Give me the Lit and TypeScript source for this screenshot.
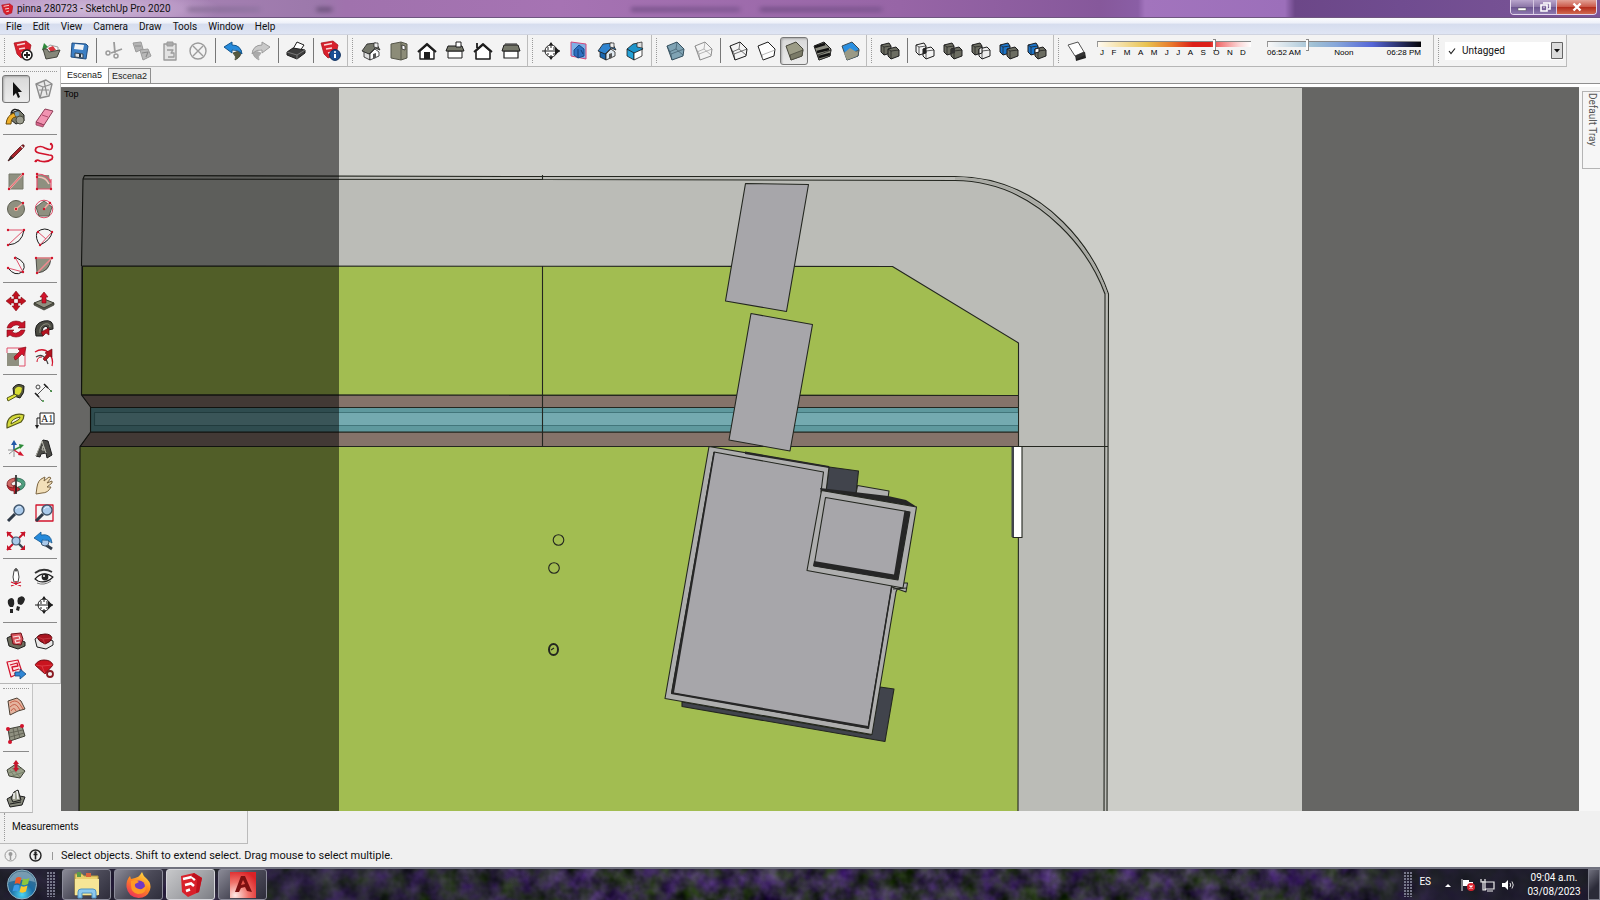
import { LitElement, html, svg, css, SVGTemplateResult } from "lit";
import { customElement, property, state } from "lit/decorators.js";
import { classMap } from "lit/directives/class-map.js";

const p = (d: string, fill = "none", stroke = "none", w = 1) =>
  svg`<path d=${d} fill=${fill} stroke=${stroke} stroke-width=${w} stroke-linejoin="round"/>`;
const c = (x: number, y: number, r: number, fill = "none", stroke = "none", w = 1) =>
  svg`<circle cx=${x} cy=${y} r=${r} fill=${fill} stroke=${stroke} stroke-width=${w}/>`;

const K = "#1d1d1d";
const R = "#d2142c";
const PINK = "#e0506a";
const STONE = "#8f9080";
const DIM = "#9b9b9b";

const dots = (...pts: [number, number][]) => pts.map(([x, y]) => c(x, y, 1.2, R));

const box = (top: string, side: string, line = K, wire = false) => svg`
  ${p("M2 5L12 1L19 8L18 15L7 19Z", top, line)}
  ${wire ? p("M2 5L6 13L19 8M6 13L7 19M12 1L11 8L4 11M11 8L18 14", "none", line, 0.6) : p("M6 14L19 9L18 15L7 19Z", side, line, 0.7)}`;

const solids = (a: string, b: string, wa = K, wb = K) => svg`
  ${p("M1 4L9 2L11 5V12L4 14L1 11Z", a, wa)}
  ${p("M1 4L4 6L11 5M4 6V14", "none", wa, 0.7)}
  ${p("M8 8L16 6L19 9V15L11 18L8 15Z", b, wb)}
  ${p("M8 8L11 10L19 9M11 10V18", "none", wb, 0.7)}`;

const house3d = (roof: string, wall: string, side: string) => svg`
  ${p("M3 10L9 13V19L3 16Z", side, K, 0.8)}
  ${p("M9 13L14 8L18 11V15L9 19Z", wall, K, 0.8)}
  ${p("M1 10L6 3L15 2L19 9L14 7L8 13Z", roof, K, 0.8)}
  ${p("M13 2V6L17 7V2Z", "#eee", K, 0.7)}
  ${p("M12 13L15 12V17L12 18Z", "#555")}`;

const sLogo = (x = 0, y = 0, s = 1) => svg`<g transform="translate(${x} ${y}) scale(${s})">
  ${p("M1 3L13 1L18 5L16 15L8 18L4 14Z", "#d8202c", "#a30f1a", 0.7)}
  ${p("M4 5L12 3.500M6 9L12 8M8 13L12 12", "none", "#f7dada", 1.4)}</g>`;

const pale = svg`${p("M1 3L12 1L16 13L5 18Z", "#fde3e3", R, 1.2)}${p("M4 6L11 4L12 7L6 8L7 12L13 10M8 15L14 13", "none", R, 1.3)}`;

const compass = svg`${c(10, 10, 6, "#fff", K)}${p("M1 10H19M10 2V7M10 14V18M7 6V9M13 6V9M7 12V14M13 12V14", "none", K)}${p("M14 6L19 10L14 14ZM10 1L8 4H12ZM10 19L8 16H12Z", K)}`;
const lens = svg`${p("M2 18L9 11", "none", "#2f3a48", 3)}${c(13, 7, 5, "#a9c9ea", "#42566c", 1.4)}${p("M10 6Q12 3 15 4", "none", "#e8f3fc", 1)}`;

const icons: Record<string, SVGTemplateResult> = {
  new: svg`${sLogo(0, -1, 1)}${c(14, 14, 5, "#fff", K, 1.6)}${p("M14 11V17M11 14H17", "none", K, 1.8)}`,
  open: svg`${p("M4 8L9 4L17 6V14L5 16Z", "#f6f6f6", "#888", 0.8)}${p("M7 7L12 5L15 9L10 11Z", "#d8343c")}${p("M1 9L3 2L7 6L5 7L4 10Z", "#2f8a3c")}${p("M2 8L5 18L16 16L19 9L8 11L6 8Z", "#85877a", "#44453d")}`,
  save: svg`${p("M3 2L17 3L19 5L17 18L2 16Z", "#3c7fc4", "#1f4c80")}${p("M6 3L15 4L14 9L5 8Z", "#f2f4f6")}${p("M6 12L14 13V17L6 16Z", "#dfe4ea", "#345")}${p("M11 13V16", "none", "#234", 2)}`,
  cut: svg`${p("M10 1L11 12M18 8L7 12", "none", DIM, 1.8)}${c(12, 15, 2, "none", DIM, 1.5)}${c(4, 12, 2, "none", DIM, 1.5)}`,
  copy: svg`${p("M1 2L9 1L11 8L4 11Z", "#b4b4b4", DIM)}${p("M8 9L16 8L19 15L11 19Z", "#b9b9b9", DIM)}${p("M3 5H9M10 12L16 11L14 16", "none", "#8a8a8a", 1.2)}`,
  paste: svg`${p("M4 3H16V19H4Z", "#e2e2e2", DIM, 1.4)}${p("M7 1H13V5H7Z", "#aaa", DIM)}${p("M7 9H13L11 12H14V16H8", "none", DIM, 1.3)}`,
  erase: svg`${c(10, 10, 8, "none", DIM, 1.4)}${p("M5 5L15 15M15 5L5 15", "none", DIM, 1.4)}`,
  undo: svg`${p("M10 12Q14 16 12 19Q19 16 18 9Z", "#55583f", "#33351f", 0.7)}${p("M1 6L9 1V4Q18 4 19 13Q15 8 9 9V12Z", "#258adb", "#13568f")}`,
  redo: svg`${p("M10 12Q6 16 8 19Q1 16 2 9Z", "#aaa", DIM, 0.7)}${p("M19 6L11 1V4Q2 4 1 13Q5 8 11 9V12Z", "#c9c9c9", DIM)}`,
  print: svg`${p("M7 8L11 1L18 4L14 10Z", "#fff", K)}${p("M1 11L7 7L19 9V12L11 18L1 14Z", "#3c3c3c", K)}${p("M1 11L11 14L19 9M11 14V18", "none", "#888", 0.8)}`,
  info: svg`${sLogo(-1, -1, 1)}${c(14, 14, 5.4, "#1b4f94", "#0b2c5a")}${p("M14 13V17", "none", "#fff", 2)}${c(14, 11, 1, "#fff")}`,
  iso: house3d("#74766a", "#fff", "#ddd"),
  topview: svg`${p("M2 3L12 1L18 3V17L12 19L2 17Z", "#8c8c78", "#55564a")}${p("M12 1V19", "none", "#55564a")}${p("M13 4L16 5V9L13 8Z", "#fff", K, 0.7)}`,
  front: svg`${p("M3 10L10 4L17 10V18H3Z", "#fff", K, 1.4)}${p("M1 11L10 3L19 11", "none", K, 2.2)}${p("M7 11H13V18H7Z", K)}`,
  right: svg`${p("M3 10H17V17H3Z", "#fff", K)}${p("M3 5H17L19 10H1Z", "#75776a", K)}${p("M11 1H16V6H11Z", "#fff", K)}`,
  back: svg`${p("M3 10L10 4L17 10V18H3Z", "#fff", K, 1.6)}${p("M1 11L10 3L19 11M4 7V2", "none", K, 1.8)}`,
  left: svg`${p("M3 10H17V17H3Z", "#fff", K, 1.2)}${p("M3 4H17L19 10H1Z", "#75776a", K)}${p("M4 3H16", "none", K)}`,
  section: compass,
  secplane: svg`${p("M2 1L17 3V18L2 15Z", "#7fb0e6", "#d3477a")}${p("M5 9L10 4L15 8V15L9 17L5 14Z", "#2d6fc0", "#1b4a88")}${p("M9 8V17M12 9L14 13", "none", "#173f77")}`,
  seccut: house3d("#2f83cf", "#dfe8ef", "#1b66ae"),
  secfill: svg`${p("M2 8L9 11V19L2 15Z", "#25a2d8", K, 0.8)}${p("M9 11L17 8V15L9 19Z", "#fff", K, 0.8)}${p("M2 8L8 3L13 2L18 8L9 12Z", "#1d93c9", K, 0.8)}${p("M12 2L17 1V7L12 6Z", "#ddd", K, 0.7)}`,
  xray: box("#7fa3b4", "#54788c", "#35505f", true),
  backedge: box("#f4f4f4", "#f4f4f4", "#8d8d8d", true),
  wire: box("none", "none", K, true),
  hidden: svg`${p("M2 5L12 1L19 8L18 15L7 19Z", "#fff", K)}${p("M6 14L19 9M6 14L7 19", "none", "#999", 0.7)}`,
  shaded: box("#9c9c86", "#7b7b68", "#45453a"),
  textured: svg`${box("#8b8c80", "#8b8c80")}${p("M3 6L13 3M5 11L17 8M7 16L18 13", "none", "#111", 2.4)}`,
  mono: svg`${box("#2a8fe0", "#8b8b79", "#3a4a55")}${p("M4 12L10 7L18 12L17 15L7 19Z", "#9a9a86")}`,
  outer: solids("#6c6d62", "#6c6d62"),
  intersect: svg`${solids("none", "none")}${p("M8 8L11 6V12L8 13Z", "#222")}`,
  union: svg`${solids("#6c6d62", "#6c6d62")}${p("M8 8L12 7V12L8 13Z", "#333")}`,
  subtract: svg`${solids("#6c6d62", "#eee")}${p("M8 8L11 6V12L8 13Z", "#eee", K)}`,
  trim: solids("#1c74c8", "#6c6d62"),
  split: svg`${solids("#1c74c8", "#6c6d62")}${p("M8 8L12 7V11L8 12Z", "#fff", K)}`,
  shadow: svg`${p("M8 13L18 11L19 17L9 20Z", "#222")}${p("M1 4L11 1L17 11L8 15Z", "#fff", "#555")}${p("M8 15L17 11L18 14L10 18Z", "#333")}`,

  select: svg`${p("M7 3V17L10 14L12 19L14 18L12 13H16Z", "#111")}`,
  component: svg`${p("M2 5L12 1L18 5L15 17L6 19Z", "#e9e9e9", "#8c8c8c", 1.4)}${p("M2 5L9 8L18 5M9 8L6 19M5 11L15 11M10 2L13 16", "none", "#8c8c8c", 1.2)}`,
  paint: svg`${p("M5 6L13 3L18 8V14L10 17L5 13Z", "#77796b", K)}${c(14, 13, 4, "#9d9e90", "#4a4b40")}${p("M5 6Q7 0 14 4", "none", K, 1.4)}${p("M0 17Q1 8 8 6L10 10Q5 10 5 17Z", "#efb02b", "#6b4a08")}${c(11, 7, 2.2, "#7aa0b8")}`,
  eraser: svg`${p("M2 15L11 2L19 4L10 18Z", "#f193b1", "#8d3b55")}${p("M2 15L10 18L9 20L2 18Z", "#d6638a", "#8d3b55", 0.7)}${p("M8 8L14 10", "none", "#b34d70")}`,
  line: svg`${p("M2 18L5 13L16 2Q19 1 18 4L7 15Z", "#a8232a", "#4d1013", 0.8)}${p("M2 18L5 13L7 15Z", "#2a2a2a")}${p("M15 3L17 5", "none", "#ddd", 1.4)}`,
  freehand: svg`${p("M1 19Q2 16 6 18Q13 20 18 16Q20 12 15 12L5 10Q0 9 2 5Q6 2 11 5Q17 8 18 5Q19 2 17 1", "none", R, 1.7)}${dots([2, 18], [17, 1])}`,
  rect: svg`${p("M3 3H17V18H3Z", STONE, "#77786a")}${p("M3 18L17 3", "none", "#f3b6b0", 2)}${p("M3 18L17 3", "none", R, 0.6)}${dots([3, 18], [17, 3])}`,
  rotrect: svg`${p("M3 4H15L17 18H3Z", STONE)}${p("M3 3V18H17V8M3 3Q14 3 17 12", "none", PINK, 1.2)}${p("M4 6Q12 6 15 13", "none", "#f3c0b8", 1.5)}${dots([3, 3], [3, 18], [17, 18], [3, 6])}`,
  circle: svg`${c(10, 10, 8.5, STONE, "#5e5f52")}${p("M10 10L17 4", "none", "#f3a8a0", 1.6)}${c(10, 10, 2, "#f0c0a0")}${dots([10, 10], [17, 4])}`,
  polygon: svg`${c(10, 10, 8.8, "none", PINK)}${p("M10 2L18 8L15 17H5L2 8Z", STONE, "#5e5f52")}${p("M10 10L16 3", "none", "#f3a8a0", 1.6)}${dots([10, 10], [16, 4])}`,
  arc: svg`${p("M2 18Q16 17 18 3", "none", K)}${p("M2 3H18L2 18", "none", PINK)}${dots([2, 3], [18, 3], [2, 18])}`,
  arc2: svg`${p("M3 5Q1 12 6 18Q17 13 18 5Q11 -1 3 5", "none", K)}${p("M6 18L18 5M4 5L12 12", "none", PINK)}${dots([6, 18], [18, 5], [4, 5])}`,
  arc3: svg`${p("M2 13Q9 22 16 17Q23 8 9 2", "none", K)}${p("M9 2L17 17L2 13", "none", PINK)}${dots([9, 3], [17, 17], [2, 13])}`,
  pie: svg`${p("M2 3H17Q16 17 3 18Z", STONE, K, 0.7)}${p("M2 3H18M3 18L18 3", "none", "#f08a90", 1.5)}${dots([2, 3], [18, 3], [3, 18])}`,
  move: svg`${p("M10 0L14 5H12V8H8V5H6ZM20 10L15 6V8H12V12H15V14ZM10 20L6 15H8V12H12V15H14ZM0 10L5 6V8H8V12H5V14Z", "#c0111f", "#7a0a12", 0.5)}${p("M8.500 8.500H11.500V11.500H8.500Z", "#f4f4f4")}`,
  push: svg`${p("M0 12L10 8L20 12L10 17Z", "#8f9080", "#3c3d33")}${p("M0 12V14L10 19L20 14V12L10 17Z", "#5b5c50", "#33342a", 0.7)}${p("M10 1L14 6H12V12H8V6H6Z", "#d2142c", "#7a0a12", 0.6)}`,
  rotate: svg`${p("M1 9Q3 2 10 2Q14 2 16 4L19 2V9H12L14 7Q9 4 5 9ZM19 11Q17 18 10 18Q6 18 4 16L1 18V11H8L6 13Q11 16 15 11Z", "#c8142a", "#7a0a12", 0.6)}`,
  follow: svg`${p("M2 17Q-1 4 10 2Q20 0 19 10L14 11Q14 6 10 8Q7 11 9 17Z", "#4a4a42", "#1b1b1b")}${p("M6 14Q5 7 11 5Q16 4 16 8", "none", "#8f9080", 1)}${p("M7 13L15 9V16L12 14L9 17Z", "#b5131f", "#5d0910", 0.6)}`,
  scale: svg`${p("M1 6H13V19H1Z", STONE)}${p("M1 1H19V19M1 1V6M13 19H19", "none", PINK)}${p("M9 13L8 10L14 4L12 2L20 0L18 9L16 7L11 12Z", "#d2142c", "#7a0a12", 0.6)}`,
  offset: svg`${p("M1 5Q9 0 15 6Q20 12 18 19", "none", R, 1.3)}${p("M3 15Q3 10 8 10", "none", R)}${p("M2 10Q10 5 14 17", "none", "#444", 1.3)}${p("M9 12L13 7L11 6L18 2L18 10L16 9L11 14Z", "#b5131f", "#5d0910", 0.6)}`,
  tape: svg`${p("M7 5Q11 -1 18 3Q19 10 14 15L8 13Z", "#55563a", K)}${p("M9 6Q12 2 16 5Q16 9 13 12L9 11Z", "#d9de35")}${p("M1 15L9 11L11 13L2 18Z", "#e1e63a", "#55571a")}`,
  dimension: svg`${p("M3 12L8 18M3 12L12 3M12 3L18 9", "none", "#555")}${p("M1 10L5 14M10 1L14 5", "none", K, 1.6)}${c(4, 4, 2, "none", "#444")}${c(17, 8, 1, "#3a8a3a")}${c(9, 18, 1, "#3a8a3a")}`,
  protractor: svg`${p("M1 17Q0 9 6 5Q12 2 18 4Q18 8 15 11Z", "#d4d93a", "#55571a", 1.2)}${p("M5 13Q5 8 14 6Q14 8 12 9Z", "#f5f5ee", "#55571a")}`,
  text: svg`${p("M6 2H20V13H6Z", "#fff", K)}<text x="7" y="11" font-family="Liberation Serif, serif" font-size="10" fill="#111">A1</text>${p("M3 7V16M3 7H6", "none", K)}${p("M1 14H5L3 18Z", K)}`,
  axes: svg`${p("M8 11V4", "none", "#2158a8", 1.6)}${p("M5 6L8 1L11 6Z", "#2158a8")}${p("M8 11L14 8", "none", "#2e8b3a", 1.4)}${p("M13 5L18 6L14 10Z", "#2e8b3a")}${p("M8 11L14 15", "none", R, 1.4)}${p("M14 12L18 17L12 16Z", R)}${p("M2 11H8M8 11V18M3 15L8 11", "none", "#777", 0.8)}`,
  text3d: svg`${p("M2 17L9 1L14 2L18 16L13 19L12 14L7 15L6 18Z", "#4b4b47", K)}${p("M2 17L8 2L12 14M9 7L8 11H11Z", "none", "#b6b6ac", 1)}`,
  orbit: svg`${p("M9 3Q1 4 1 9Q1 13 8 14V11Q5 10 5 9Q5 7 9 6Z", "#cf6a66", "#6f1219", 0.7)}${p("M11 3Q20 4 19 10Q18 14 12 16V12Q16 11 16 9Q15 7 11 6Z", "#51a080", "#1f5a43", 0.7)}${p("M1 10Q2 16 8 16V19L14 14L8 10V13Q3 13 1 10Z", "#c62a35", "#6f1219", 0.7)}${p("M10 0V19", "none", K, 1.6)}`,
  pan: svg`${p("M2 19L3 12Q4 5 9 3L11 2L10 6L15 2L17 3L13 8L18 6V8L13 12L17 12Q14 18 8 18Z", "#f2dfb9", "#7b6440")}`,
  zoom: lens,
  zoomwin: svg`${p("M2 2H19V18H2Z", "none", R, 1.3)}${lens}`,
  zoomext: svg`${p("M11 11L18 18", "none", "#38424e", 2.4)}${p("M1 1L7 7M19 1L13 7M1 19L7 13", "none", "#c8142a", 2)}${p("M1 1H6L1 6ZM19 1H14L19 6ZM1 19H6L1 14ZM19 19H14L19 14Z", "#c8142a")}${c(10, 10, 4, "#a9c9ea", "#42566c", 1.2)}`,
  prev: svg`${p("M9 12L18 18", "none", "#2f3a48", 3)}${c(11, 11, 4, "#a9c9ea", "#42566c", 1)}${p("M0 7L7 1V4Q17 2 18 12Q14 8 8 9V12Z", "#258adb", "#13568f", 0.8)}`,
  camera: svg`${p("M8 4Q10 -1 12 4L13 10L12 15H8L7 10Z", "#fff", "#444")}${c(10, 3, 1.6, "#555")}${p("M5 19L15 15M5 15L15 19M10 14V17", "none", R, 1.3)}`,
  look: svg`${p("M1 6Q9 0 18 5", "none", "#333", 1.8)}${p("M1 12Q9 3 19 10Q12 17 4 14Z", "#fff", K, 1.2)}${c(11, 10, 3.4, "#222")}${c(10, 9, 1, "#fff")}${p("M3 16Q10 19 17 14", "none", "#777", 1)}`,
  walk: svg`${p("M2 5Q6 1 8 5Q9 9 7 12H4Q1 9 2 5ZM4 14H7V18H4Z", "#252525")}${p("M12 3Q17 -1 19 4Q18 9 15 10L12 9Q11 5 12 3ZM11 11L14 12L13 16L10 15Z", "#252525")}`,
  secplane2: compass,
  warehouse: svg`${p("M1 7L5 5L19 11V15L12 18L3 15Z", "#6c6d5d", K)}${p("M5 3L15 2L17 8L15 14L7 13Z", "#d9555d", "#6f1219")}${p("M7 6L13 5L14 8L9 9L10 12L14 11", "none", "#fbe3e3", 1.1)}`,
  extwarehouse: svg`${p("M1 8L6 4L19 10V14L12 18L3 16Z", "#e8e8e8", K)}${p("M3 6Q5 3 11 3Q17 3 18 7Q17 11 11 13Q4 10 3 6Z", "#a91520", "#5a0a10")}${p("M3 6L9 8L18 7M9 8L11 13", "none", "#c73b45", 0.8)}`,
  layout: svg`${pale}${p("M9 13H14V10L20 15L14 20V17H9Z", "#2f86d4", "#134a80", 0.8)}`,
  extman: svg`${p("M1 6Q4 1 10 1Q17 1 19 6L11 15Z", "#c9141f", "#6f0a11")}${p("M1 6L8 7L19 6M8 7L11 15", "none", "#e0444d", 0.8)}${c(16, 15, 3, "#eee", "#8a1a22", 1.8)}`,
  contours: svg`${p("M2 5L11 2L15 5L19 13L12 15L4 19Z", "#e5b49f", "#4c4034")}${p("M4 7Q9 3 13 7L17 13M4 11Q9 6 12 11L14 14M5 15Q8 10 10 15", "none", "#c1553d", 0.9)}`,
  scratch: svg`${p("M2 5L16 2L19 12L4 17Z", STONE, "#3f4036")}${p("M7 4L9 16M11 3L14 14M3 9L17 6M4 13L18 9", "none", "#5a5b4e", 0.8)}${[c(2, 5, 2, R), c(16, 2, 2, R), c(4, 18, 2, R)]}`,
  smoove: svg`${p("M1 10L10 4L19 11L14 18L3 16Z", "#9aa08a", "#3f4036")}${p("M3 13L16 8M6 16L18 12M6 8L14 17M4 10L9 17", "none", "#6c775f", 0.7)}${p("M10 0L13 4H11.5V8H13L10 12L7 8H8.5V4H7Z", "#c8142a")}`,
  stamp: svg`${p("M1 11L8 7L19 9L16 17L4 19Z", "#85877a", K)}${p("M5 10L8 4L12 2L15 12L7 14Z", "#9b9d8e", K)}${p("M8 5V11M11 3L12 11", "none", "#f2f2f2", 1.6)}${p("M4 16L15 14", "none", K)}`,
};

@customElement("tool-icon")
class ToolIcon extends LitElement {
  @property() name = "";
  static styles = css`
    :host { display: block; width: 20px; height: 20px; }
    svg { display: block; width: 100%; height: 100%; overflow: visible; }
  `;
  render() {
    return html`<svg viewBox="0 0 20 20" aria-hidden="true">${icons[this.name]}</svg>`;
  }
}

@customElement("model-scene")
class ModelScene extends LitElement {
  static styles = css`
    :host { display: block; position: relative; overflow: hidden; background: #cccdc8; }
    svg { position: absolute; width: 100%; height: 100%; }
    .e { stroke: #23261f; stroke-width: 1.1; stroke-linejoin: round; }
    .n { fill: none; }
    .walk { fill: #bbbcb7; }
    .curb { fill: none; stroke: #a9aaa4; stroke-width: 2.5; }
    .grass { fill: #a2bd51; }
    .earth { fill: #85736a; }
    .bank { fill: #5f999e; }
    .water { fill: #74aab0; stroke: #42767b; }
    .slab { fill: #a7a6aa; }
    .rim { fill: #aeaeae; }
    .shade { fill: #41444c; }
    .deep { fill: #262626; }
    .label { position: absolute; left: 3px; top: 1px; font: 9px/10px "Liberation Sans", sans-serif; color: #000; }
  `;
  render() {
    return html`
      <svg viewBox="61 88 1518 723" preserveAspectRatio="xMinYMin slice" role="img" aria-label="Site plan, top view">
        <path class="e walk" d="M84.500 175.500L542 176.500H955Q1018 177 1063 222Q1095 254 1108.500 294L1107 820H79V300L81.500 266L83 179Z"/>
        <path class="curb" d="M955 178.500Q1016 179 1061.500 224Q1093 255 1106.500 294"/>
        <path class="e n" d="M83 179L542 179.500L955 180.500Q1014 181 1060 226Q1091 256 1105 294L1104 820M542.500 175V180M1018 446.500H1108"/>
        <path class="e grass" d="M82.500 266L892.500 266.500L1018.500 343V395.500L81.500 395Z"/>
        <path class="e earth" d="M81.500 395L1018.500 395.500V407.500H90.500Z"/>
        <path class="e earth" d="M90.500 432H1018.500V446.500H80Z"/>
        <path class="e bank" d="M90.500 407.500H1018.500V432H90.500Z"/>
        <path class="e water" d="M1018 412.500H94.500V425.500H1018"/>
        <path d="M61 266H82L81.500 395L90.500 407V432L80 446L79 812H61Z" fill="#cccdc8"/>
        <path class="e n" d="M82 266L81.500 395L90.500 407V432L80 446.500"/>
        <path class="e grass" d="M80 446.500H1018.500L1018 820H79Z"/>
        <path class="e n" d="M542.500 266V446"/>
        <path d="M61 88H339V811H61ZM1302 88H1579V811H1302Z" opacity=".5"/>
        <path class="e slab" d="M745.500 183.500L808.500 184.500L786.500 311.500L725.500 301Z"/>
        <path class="e slab" d="M751 313.500L812.500 324.500L790 451L729 440Z"/>
        <path class="e" fill="#fff" d="M1013 446.500H1022V537.500H1013Z"/>
        <path class="shade" d="M1011.500 447H1014V537H1011.500Z"/>
        <path class="e shade" d="M829 467L858.500 471L856 494L826 490Z"/>
        <path class="e rim" d="M857.500 485.500L889 491L888 498L856 494Z"/>
        <path class="e shade" d="M682 702L682 706.500L885 741.500L894 689L880 687L871 735Z"/>
        <path class="e rim" d="M709 446.500L829 467L826 492L899 585L896 592L872 734.500L665 698.500Z"/>
        <path class="deep" d="M745 451.500L829 466L829 468L745 454Z"/>
        <path class="e slab" d="M714 452L823.500 472L821 492L892 585L868 728L671.500 693Z"/>
        <path class="deep" d="M713.500 452L715 452L674 692.500L868 726L891 586H892.500L869 729L671 694Z"/>
        <path class="e rim" d="M892 587L893 583L907.500 583L906 592Z"/>
        <path class="e n" d="M893 589L907 588"/>
        <path class="deep" d="M820 488L888 496L906 500L917 507L821 491Z"/>
        <path class="e rim" d="M821.500 490.500L916.500 507L903 588L807 570.500Z"/>
        <path class="e slab" d="M825.500 497.500L910 512L898 580L814 566Z"/>
        <path class="deep" d="M904.500 510.500L910 512L898 580L813 566L814 561L894 574.500Z"/>
        <g class="e n">
          <circle cx="558.500" cy="540" r="5.300"/>
          <circle cx="554" cy="568" r="5.300"/>
          <ellipse cx="553.500" cy="649.500" rx="4.500" ry="5.500" stroke-width="2"/>
          <path d="M551 650L554 648"/>
        </g>
      </svg>
      <span class="label">Top</span>`;
  }
}

const MAIN: string[][] = [
  ["new", "open", "save", "|", "cut", "copy", "paste", "erase", "|", "undo", "redo", "|", "print", "|", "info"],
  ["iso", "topview", "front", "right", "back", "left"],
  ["section", "secplane", "seccut", "secfill"],
  ["xray", "backedge", "|", "wire", "hidden", "shaded", "textured", "mono"],
  ["outer", "|", "intersect", "union", "subtract", "trim", "split"],
];
const LARGE: string[][] = [
  ["select", "component", "paint", "eraser"],
  ["line", "freehand", "rect", "rotrect", "circle", "polygon", "arc", "arc2", "arc3", "pie"],
  ["move", "push", "rotate", "follow", "scale", "offset"],
  ["tape", "dimension", "protractor", "text", "axes", "text3d"],
  ["orbit", "pan", "zoom", "zoomwin", "zoomext", "prev"],
  ["camera", "look", "walk", "secplane2"],
  ["warehouse", "extwarehouse", "layout", "extman"],
];
const SANDBOX: string[][] = [["contours", "scratch"], ["smoove", "stamp"]];
const DISABLED = new Set(["cut", "copy", "paste", "erase", "redo"]);

@customElement("app-root")
class AppRoot extends LitElement {
  @state() private face = "shaded";
  @state() private tool = "select";
  @state() private scene = "Escena5";

  static styles = css`
    :host {
      display: flex; flex-direction: column; height: 100vh; overflow: hidden;
      font: 10px/14px Roboto, "Noto Sans", sans-serif; color: #111; background: #f0f0f0;
    }
    * { box-sizing: border-box; }
    button { font: inherit; color: inherit; background: none; border: 0; padding: 0; margin: 0; }

    .title {
      display: flex; align-items: center; height: 18px; flex: none; position: relative; overflow: hidden;
      border-bottom: 1px solid #6f5680;
      background:
        radial-gradient(ellipse 130px 22px at 90px 9px, #d3bfdce0, #c5a6d0a0 70%, transparent),
        linear-gradient(90deg, #b18cbc 0, #9c78ab 320px, #a072ad 345px, #a673b3 560px, #9765a6 900px, #86589b 1100px, #8a5ea5 1138px, #a274bd 1145px, #9c6fba 1285px, #6c4788 1295px, #704c90 1400px, #7b5597 100%);
    }
    .title h1 { margin: 0; font: inherit; color: #111; position: relative; }
    .title .logo { width: 12px; height: 12px; margin: 0 4px 0 1px; }
    .haze { position: absolute; inset: 0; filter: blur(2px); opacity: .55;
      background:
        linear-gradient(90deg, transparent 185px, #6f5b7e 190px, #86709a 258px, transparent 262px, transparent 315px, #4c3a5c 318px, #4c3a5c 330px, transparent 334px, transparent 630px, #5b3f70 632px, #6a4a80 738px, transparent 742px, transparent 758px, #5b3f70 762px, #6a4a80 880px, transparent 884px) 0 7px / 100% 5px no-repeat; }
    .winbtns { display: flex; margin-left: auto; align-self: flex-start; margin-right: 3px; position: relative; height: 15px; border: 1px solid #e3d6ec; border-top: 0; border-radius: 0 0 4px 4px; overflow: hidden; }
    .winbtns button { width: 23px; display: grid; place-items: center; background: linear-gradient(#b9a5cc, #8d77a8 48%, #6d5590 52%, #8d78ae); border-right: 1px solid #d6c8e2; }
    .winbtns .close { width: 39px; border: 0; background: linear-gradient(#e2a196, #cb5a4a 48%, #b32c1c 52%, #d06a50); }
    .winbtns svg { width: 12px; height: 10px; }

    .menu { display: flex; flex: none; height: 17px; gap: 11px; padding: 0 6px; align-items: flex-end; background: linear-gradient(#fbfcfe, #eef1f9 30%, #d6ddee 40%, #dfe5f4); border-bottom: 1px solid #d0d4e0; }
    .menu button { line-height: 15px; }

    .bar { display: flex; flex: none; height: 32px; }
    .group { display: flex; align-items: center; padding: 0 2px 0 9px; border-right: 1px solid #bcbcbc; border-bottom: 1px solid #b6b6b6; position: relative; background: #f3f3f3; }
    .group::before { content: ""; position: absolute; left: 4px; top: 3px; bottom: 3px; border-left: 1px dotted #9a9a9a; }
    .bar i { width: 7px; height: 25px; background: linear-gradient(#777, #777) 3px 0 / 1px 100% no-repeat; }
    .tool { width: 28px; height: 28px; display: grid; place-items: center; border: 1px solid transparent; border-radius: 3px; }
    .tool.on { border-color: #777; background: linear-gradient(#d8d8d8, #ececec); box-shadow: inset 1px 1px 2px #aaa; }

    .slide { display: flex; flex-direction: column; width: 154px; height: 27px; font: 8px/9px "Liberation Sans", sans-serif; color: #000; }
    .months { margin-left: 6px; }
    .hours { margin: 0 10px 0 16px; }
    .slide input { appearance: none; width: 100%; height: 13px; margin: 0; background: transparent; }
    .slide input::-webkit-slider-runnable-track { height: 6px; border-top: 1px solid #888; border-left: 1px solid #999; }
    .months input::-webkit-slider-runnable-track { background: linear-gradient(90deg, #fffaf0, #e9c250 32%, #e8782c 48%, #dc1f18 62%, #dc1f18 73%, #f06a6a 78%, #fbd5d5 92%, #fff); }
    .hours input::-webkit-slider-runnable-track { background: linear-gradient(90deg, #f8f8f8, #9fc0d4 30%, #86a6da 45%, #5566d8 68%, #2c336e 85%, #050508); }
    .slide input::-webkit-slider-thumb { appearance: none; width: 3px; height: 12px; margin-top: -3px; background: #fff; border: 1px solid #888; border-left: 0; }
    .ticks { display: flex; justify-content: space-between; padding: 0 5px 0 3px; margin-top: -2px; }
    .hours .ticks { padding: 0; }

    .tags { padding: 0 3px 0 11px; }
    .combo { display: flex; align-items: center; width: 118px; height: 18px; background: #fff; position: relative; }
    .combo svg { position: absolute; pointer-events: none; }
    .combo .tick { left: 3px; width: 8px; height: 8px; }
    .combo .drop { right: 0; width: 12px; height: 17px; }
    .combo select { appearance: none; width: 100%; height: 100%; border: 0; background: transparent; padding: 0 14px 0 17px; font: inherit; color: inherit; }

    .work { display: flex; flex: 1; min-height: 0; }
    .left { width: 61px; flex: none; display: flex; flex-direction: column; align-items: flex-start; }
    .pal { position: relative; padding: 8px 2px 0; border-right: 1px solid #c4c4c4; border-bottom: 1px solid #b6b6b6; background: #f4f4f4; }
    .pal::before { content: ""; position: absolute; left: 3px; right: 3px; top: 4px; border-top: 1px dotted #9a9a9a; }
    .set { display: grid; grid-template-columns: 28px 28px; }
    .set.one { grid-template-columns: 28px; }
    .set + .set { margin-top: 8px; position: relative; }
    .set + .set::before { content: ""; position: absolute; left: 1px; right: 1px; top: -5px; height: 1px; background: #8a8a8a; }

    .right { flex: 1; min-width: 0; display: flex; flex-direction: column; }
    .tabs { display: flex; align-items: flex-end; height: 17px; flex: none; border-bottom: 1px solid #8f8f8f; }
    .tabs button { font: 9px/14px "Liberation Sans", sans-serif; height: 15px; padding: 0 3px; border: 1px solid #8f8f8f; border-bottom: 0; color: #222; background: #ededed; }
    .tabs .on { height: 16px; line-height: 13px; background: #fff; padding: 0 5px; border-color: #fff; }
    .stage { flex: 1; display: flex; min-height: 0; padding-top: 3px; background: #fff; }
    .stage model-scene { flex: 1; border-top: 1px solid #6d6d6d; }
    .tray { width: 21px; flex: none; padding: 4px 0 0 3px; background: #f6f6f6; }
    .tray button { writing-mode: vertical-rl; width: 18px; height: 78px; border: 1px solid #b4b4b4; border-right: 0; text-align: left; padding: 1px 0; color: #555; line-height: 16px; }

    .foot { flex: none; background: #f0f0f0; }
    .measure { display: flex; align-items: center; width: 248px; height: 33px; border-right: 1px solid #bbb; border-bottom: 1px solid #bbb; position: relative; padding-left: 12px; }
    .measure::before { content: ""; position: absolute; left: 4px; top: 2px; bottom: 2px; border-left: 1px dotted #9a9a9a; }
    .measure input { flex: 1; width: 0; height: 22px; margin-left: 8px; border: 0; background: transparent; font: inherit; }
    .status { display: flex; align-items: center; height: 23px; padding-left: 4px; font-size: 11px; }
    .status svg { width: 13px; height: 13px; margin-right: 12px; }
    .status i { width: 1px; height: 8px; background: #999; margin: 0 8px 0 -2px; }

    .task {
      display: flex; flex: none; height: 33px; border-top: 2px solid #70717e; color: #fff; position: relative; overflow: hidden;
      background: #2b2a38;
    }
    .task > * { position: relative; }
    .task .wall { position: absolute; inset: 0; width: 100%; height: 100%; }
    .orb { width: 44px; display: grid; place-items: center; }
    .orb svg { width: 32px; height: 31px; }
    .grip { width: 8px; margin: 3px 7px 3px 3px; background: radial-gradient(circle at 1px 1px, #77788a 1px, transparent 1px) 0 0 / 3px 3px; }
    .app { width: 49px; height: 31px; margin: 0 3px 0 0; display: grid; place-items: center; border: 1px solid #8d8d9b; border-radius: 3px; background: linear-gradient(135deg, #8a8a96, #4c4b59 50%, #2e2d3b); }
    .app.on { background: linear-gradient(135deg, #c7c8ca, #a5a6aa 50%, #7c7d84); border-color: #d5d5da; }
    .app svg { width: 28px; height: 28px; }
    .notify { margin-left: auto; display: flex; align-items: center; }
    .notify .grip { align-self: stretch; margin: 3px 7px 3px 0; }
    .notify svg { width: 16px; height: 14px; margin-right: 4px; }
    .lang { margin-right: 9px; margin-bottom: 5px; }
    .clock { width: 64px; margin-left: 2px; text-align: center; line-height: 14px; }
    .peek { width: 12px; align-self: stretch; margin-left: 2px; border: 1px solid #777885; background: linear-gradient(135deg, #70707e, #2b2b38 60%); }
  `;

  private btn(n: string, on: boolean, pick: () => void) {
    return html`<button class=${classMap({ tool: true, on })} aria-label=${n} ?disabled=${DISABLED.has(n)} @click=${pick}>
      <tool-icon name=${n}></tool-icon></button>`;
  }

  private palette(sets: string[][], one = false) {
    return html`<div class="pal">${sets.map((s) => html`<div class=${classMap({ set: true, one })}>
      ${s.map((n) => this.btn(n, n === this.tool, () => (this.tool = n)))}</div>`)}</div>`;
  }

  render() {
    return html`
      <header class="title">
        <div class="haze"></div>
        <svg class="logo" viewBox="0 0 18 18">${sLogo()}</svg>
        <h1>pinna 280723 - SketchUp Pro 2020</h1>
        <div class="winbtns">
          <button aria-label="Minimize"><svg viewBox="0 0 12 10"><path d="M2 6H10V8.500H2Z" fill="#fff" stroke="#555" stroke-width=".5"/></svg></button>
          <button aria-label="Restore"><svg viewBox="0 0 12 10"><path d="M4 1H11V7H9M2 3H8V9H2Z M4.500 5.500H5.500" fill="none" stroke="#fff" stroke-width="1.600"/></svg></button>
          <button class="close" aria-label="Close"><svg viewBox="0 0 12 10"><path d="M2.500 1.500L9.500 8.500M9.500 1.500L2.500 8.500" stroke="#fff" stroke-width="2.400"/></svg></button>
        </div>
      </header>
      <nav class="menu">
        ${["File", "Edit", "View", "Camera", "Draw", "Tools", "Window", "Help"].map((m) => html`<button>${m}</button>`)}
      </nav>
      <div class="bar">
        ${MAIN.map((g) => html`<div class="group">${g.map((n) => n === "|" ? html`<i></i>` : this.btn(n, n === this.face, () => (this.face = n)))}</div>`)}
        <div class="group">
          ${this.btn("shadow", false, () => {})}
          <div class="slide months">
            <input type="range" aria-label="Date" min="0" max="153" value="117">
            <div class="ticks">${[..."JFMAMJJASOND"].map((m) => html`<span>${m}</span>`)}</div>
          </div>
          <div class="slide hours">
            <input type="range" aria-label="Time" min="0" max="153" value="39">
            <div class="ticks"><span>06:52 AM</span><span>Noon</span><span>06:28 PM</span></div>
          </div>
        </div>
        <div class="group tags">
          <div class="combo">
            <svg class="tick" viewBox="0 0 8 8"><path d="M1 4L3 6.500L7 1.500" fill="none" stroke="#222" stroke-width="1.200"/></svg>
            <select aria-label="Tag"><option>Untagged</option></select>
            <svg class="drop" viewBox="0 0 12 17"><path d="M.5 .5H11.500V16.500H.5Z" fill="#dcdcdc" stroke="#666"/><path d="M3 7H9L6 10.500Z" fill="#111"/></svg>
          </div>
        </div>
      </div>
      <div class="work">
        <aside class="left">${this.palette(LARGE)}${this.palette(SANDBOX, true)}</aside>
        <div class="right">
          <div class="tabs">${["Escena5", "Escena2"].map((t) => html`<button class=${classMap({ on: t === this.scene })} @click=${() => (this.scene = t)}>${t}</button>`)}</div>
          <div class="stage">
            <model-scene></model-scene>
            <div class="tray"><button>Default Tray</button></div>
          </div>
        </div>
      </div>
      <footer class="foot">
        <div class="measure"><label for="m">Measurements</label><input id="m" type="text"></div>
        <div class="status">
          <svg viewBox="0 0 13 13"><circle cx="6.500" cy="6.500" r="5.500" fill="none" stroke="#999"/><circle cx="6.500" cy="5" r="2" fill="#999"/><path d="M6.500 5V11" stroke="#999" stroke-width="1.500"/></svg>
          <svg viewBox="0 0 13 13"><circle cx="6.500" cy="6.500" r="5.500" fill="none" stroke="#222" stroke-width="1.400"/><circle cx="6.500" cy="3.500" r="1.200" fill="#222"/><path d="M6.500 4V10.500M4.500 5.500H8.500" stroke="#222" stroke-width="1.600"/></svg>
          <i></i><span>Select objects. Shift to extend select. Drag mouse to select multiple.</span>
        </div>
      </footer>
      <div class="task">
        <svg class="wall" preserveAspectRatio="none" aria-hidden="true">
          <defs>
            <filter id="n" x="0" y="0" width="100%" height="100%" color-interpolation-filters="sRGB">
              <feTurbulence type="fractalNoise" baseFrequency=".05" numOctaves="3" seed="7"/>
              <feColorMatrix values=".35 .3 0 0 -.135  .4 0 0 0 -.03  .3 .65 0 0 -.235  0 0 0 0 1"/>
            </filter>
            <linearGradient id="d"><stop offset="0" stop-color="#1c1b29" stop-opacity=".8"/><stop offset=".2" stop-color="#1c1b29" stop-opacity=".4"/><stop offset=".4" stop-color="#1c1b29" stop-opacity="0"/><stop offset=".84" stop-color="#1c1b29" stop-opacity=".1"/><stop offset=".9" stop-color="#1c1b29" stop-opacity=".85"/></linearGradient>
          </defs>
          <rect width="100%" height="100%" filter="url(#n)"/>
          <rect width="100%" height="100%" fill="url(#d)"/>
        </svg>
        <button class="orb" aria-label="Start">
          <svg viewBox="0 0 32 31">
            <defs><radialGradient id="o" cx=".5" cy=".85" r=".85"><stop offset="0" stop-color="#4cd6f4"/><stop offset=".45" stop-color="#1c6ca4"/><stop offset="1" stop-color="#4a7288"/></radialGradient></defs>
            <circle cx="16" cy="15.500" r="14.500" fill="url(#o)" stroke="#8fb3c4"/>
            <path d="M3 13Q5 3 16 2.500Q27 3 29 13Q16 9 3 13Z" fill="#fff" opacity=".3"/>
            <path d="M10 9Q13 7 15.500 9L14 15Q11 13.500 8.500 15Z" fill="#ee5a2a"/>
            <path d="M17 9.500Q20 11 23.500 9L22 15Q19 17 15.500 15.500Z" fill="#8cc63f"/>
            <path d="M8 16.500Q11 15 13.500 16.500L12 22.500Q9 21 6.500 22.500Z" fill="#3d9be8"/>
            <path d="M15 17Q18 18.500 21.500 16.500L20 22.500Q17 24.500 13.500 23Z" fill="#fbc62c"/>
          </svg>
        </button>
        <div class="grip"></div>
        <button class="app" aria-label="Explorer">
          <svg viewBox="0 0 28 28"><path d="M2 3H9L11 5H25V24H2Z" fill="#e8cf6c" stroke="#b79a3c"/><path d="M4 1H8V6H4Z" fill="#5b9a4a"/><path d="M13 2H18V6H13Z" fill="#d9633c"/><path d="M2 8H26V24H2Z" fill="#f6e596"/><path d="M5 27V21Q5 18 8 18H20Q23 18 23 21V27H19V22H9V27Z" fill="#8cc9ee" stroke="#4e93c4"/></svg>
        </button>
        <button class="app" aria-label="Firefox">
          <svg viewBox="0 0 28 28">
            <defs><linearGradient id="f" x1=".8" y1="0" x2=".2" y2="1"><stop offset="0" stop-color="#ffe14a"/><stop offset=".45" stop-color="#ff8a1f"/><stop offset="1" stop-color="#ec2a5c"/></linearGradient></defs>
            <path d="M17 1Q18 5 22 8Q27 13 25 19Q22 27 13.500 27Q3 26 1.500 16Q1 9 5 5L6 8L10 7Q14 6 15 4Z" fill="url(#f)"/>
            <circle cx="14" cy="15.500" r="6" fill="#7139c4"/><path d="M6 10Q11 8 14 11L10 13Q9 17 14 18Q18 19 21 14Q22 23 13 23Q6 22 6 14Z" fill="#ff9a25"/>
          </svg>
        </button>
        <button class="app on" aria-label="SketchUp">
          <svg viewBox="0 0 28 28"><path d="M4 5L17 2L25 7L22 21L11 26L5 21Z" fill="#d9202a"/><path d="M6 8L15 6L18 9M8 14L14 12.500L17 15M9 20L13 18.500" fill="none" stroke="#fff" stroke-width="2.600"/><path d="M17 2L25 7L22 21L19 22L20 9L14 5Z" fill="#bf101c"/></svg>
        </button>
        <button class="app" aria-label="AutoCAD">
          <svg viewBox="0 0 28 28"><defs><radialGradient id="a" cx=".2" cy=".9" r="1"><stop offset="0" stop-color="#fde9e6"/><stop offset=".5" stop-color="#f0746c"/><stop offset="1" stop-color="#dc2226"/></radialGradient></defs><path d="M1 1H27V27H1Z" fill="url(#a)"/><path d="M6 21L12 5H16L23 21L18 20L16 16L12 17L10 21Z" fill="#7c1011"/><path d="M12 14L14 9L16 13Z" fill="#e4554c"/></svg>
        </button>
        <div class="notify">
          <div class="grip"></div>
          <span class="lang">ES</span>
          <svg viewBox="0 0 16 14"><path d="M5 9L8 6L11 9Z" fill="#fff"/></svg>
          <svg viewBox="0 0 16 14"><path d="M2 1V13" stroke="#ddd"/><path d="M3 2H9V4H13V9H9V8H3Z" fill="#fff"/><circle cx="11" cy="9" r="4" fill="#d8222c"/><path d="M9.500 7.500L12.500 10.500M12.500 7.500L9.500 10.500" stroke="#fff" stroke-width="1.200"/></svg>
          <svg viewBox="0 0 16 14"><path d="M5 4H14V11H5ZM7 13H13M3 3V12H6M1 1V4H5V1" fill="none" stroke="#eee" stroke-width="1.200"/></svg>
          <svg viewBox="0 0 16 14"><path d="M2 5H5L8 2V12L5 9H2Z" fill="#fff"/><path d="M10 5Q11.500 7 10 9M12 3.500Q14.500 7 12 10.500" fill="none" stroke="#ddd"/></svg>
          <div class="clock">09:04 a.m.<br>03/08/2023</div>
          <button class="peek" aria-label="Show desktop"></button>
        </div>
      </div>`;
  }
}
